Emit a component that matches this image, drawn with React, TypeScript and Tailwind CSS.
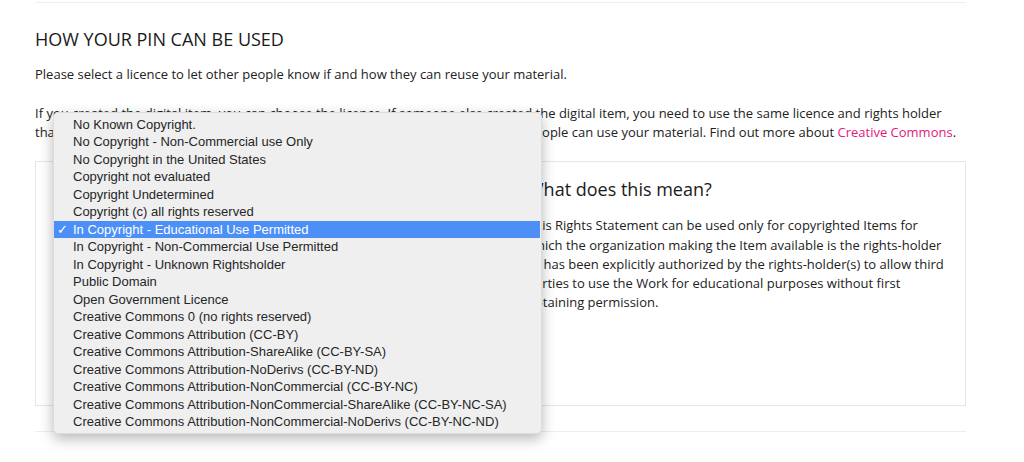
import React from 'react';

const licences = [
  'No Known Copyright.',
  'No Copyright - Non-Commercial use Only',
  'No Copyright in the United States',
  'Copyright not evaluated',
  'Copyright Undetermined',
  'Copyright (c) all rights reserved',
  'In Copyright - Educational Use Permitted',
  'In Copyright - Non-Commercial Use Permitted',
  'In Copyright - Unknown Rightsholder',
  'Public Domain',
  'Open Government Licence',
  'Creative Commons 0 (no rights reserved)',
  'Creative Commons Attribution (CC-BY)',
  'Creative Commons Attribution-ShareAlike (CC-BY-SA)',
  'Creative Commons Attribution-NoDerivs (CC-BY-ND)',
  'Creative Commons Attribution-NonCommercial (CC-BY-NC)',
  'Creative Commons Attribution-NonCommercial-ShareAlike (CC-BY-NC-SA)',
  'Creative Commons Attribution-NonCommercial-NoDerivs (CC-BY-NC-ND)',
];

const selected = 'In Copyright - Educational Use Permitted';

const LicenceMenu: React.FC = () => {
  return (
    <div className="absolute left-[18px] top-[112px] w-[489px] h-[322px] bg-[#efefef] rounded-[5px] border border-[#dcdcdc] shadow-[0_5px_14px_rgba(0,0,0,0.28)] pt-[2.5px] font-['Liberation_Sans',Arial,sans-serif] text-[13px] text-[#262626]">
      {licences.map((item) =>
        item === selected ? (
          <div key={item} className="relative h-[17.5px] leading-[17.5px] pl-[19px] mr-[1px] bg-[#4b8ff7] text-white">
            <span className="absolute left-[3px] top-0">✓</span>
            {item}
          </div>
        ) : (
          <div key={item} className="h-[17.5px] leading-[17.5px] pl-[19px]">
            {item}
          </div>
        )
      )}
    </div>
  );
};

export default function App() {
  return (
    <div className="min-h-screen bg-white font-['Open_Sans','Noto_Sans',sans-serif] text-[#222]">
      <div className="relative ml-[35px] w-[931px] pt-[2px]">
        <div className="border-t border-[#eeeeee]" />

        <h2 className="mt-[25px] text-[18px] leading-[22px] text-[#1a1a1a]">HOW YOUR PIN CAN BE USED</h2>

        <p className="mt-[15px] text-[13px] leading-[18.4px]">
          Please select a licence to let other people know if and how they can reuse your material.
        </p>

        <p className="mt-[21px] text-[13px] leading-[18.4px] whitespace-nowrap">
          If you created the digital item, you can choose the licence. If someone else created the digital item, you need to use the same licence and rights holder
          <br />
          that applies to the original item. The licence you pick lets other people know how people can use your material. Find out more about{' '}
          <a className="text-[#e6167f]">Creative Commons</a>.
        </p>

        <div className="mt-[20px] h-[245px] border border-[#e6e6e6] grid grid-cols-[491px_1fr]">
          <div />
          <div className="pt-[16px] pr-[14px]">
            <h3 className="text-[18px] leading-[22px] text-[#1a1a1a]">What does this mean?</h3>
            <p className="mt-[16px] text-[13px] leading-[19.3px]">
              This Rights Statement can be used only for copyrighted Items for which the organization making the Item available is the rights-holder or has been explicitly authorized by the rights-holder(s) to allow third parties to use the Work for educational purposes without first obtaining permission.
            </p>
          </div>
        </div>

        <div className="mt-[25px] border-t border-[#eeeeee]" />

        <LicenceMenu />
      </div>
    </div>
  );
}
